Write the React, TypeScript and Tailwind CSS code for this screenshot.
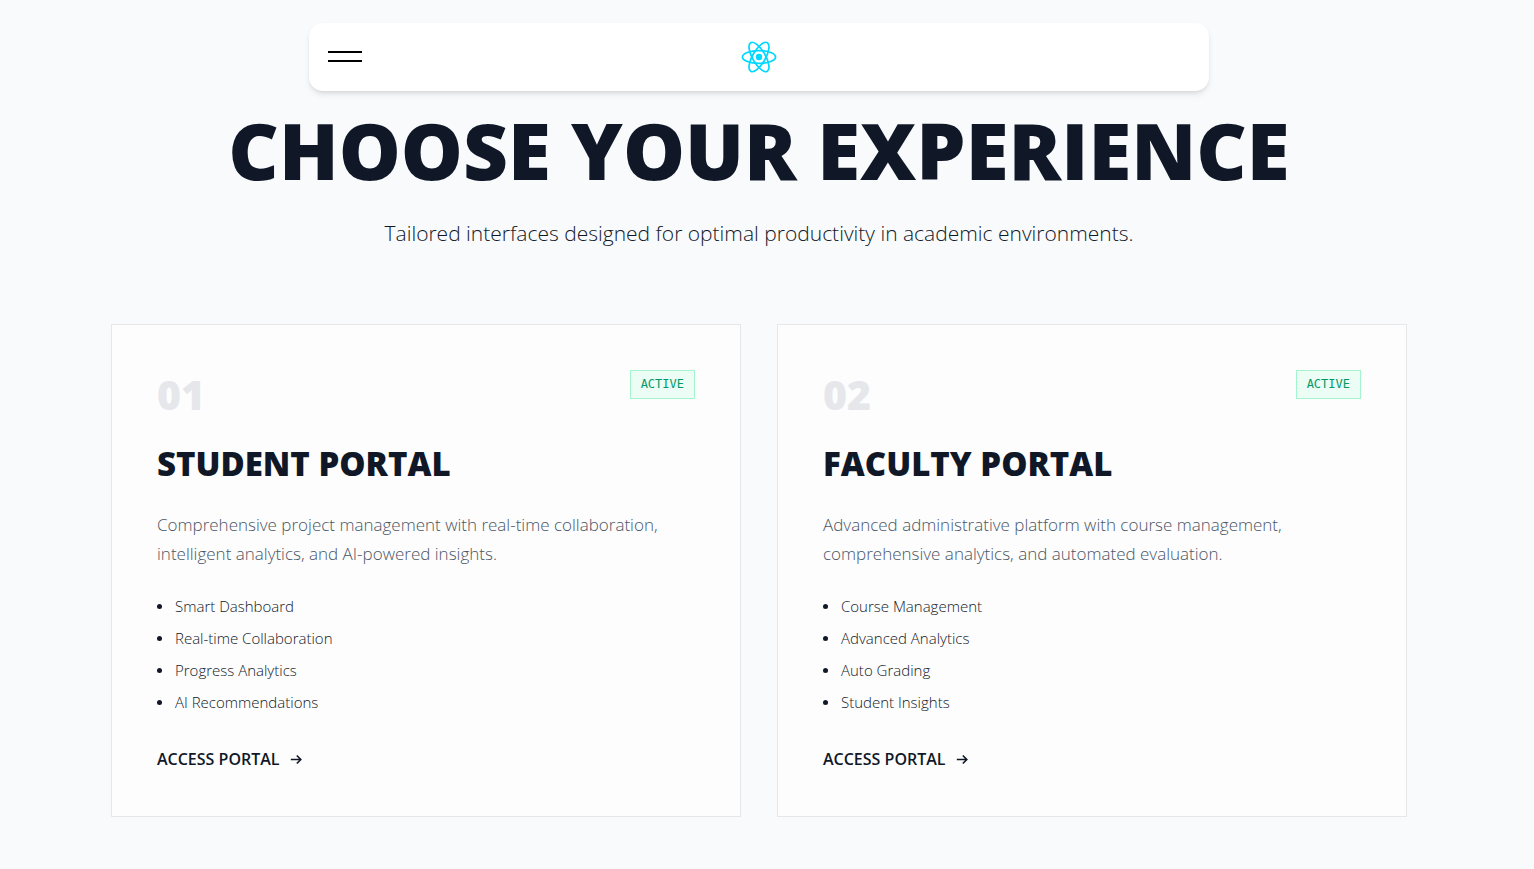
type Portal = {
  number: string;
  title: string;
  description: string;
  features: string[];
};

const portals: Portal[] = [
  {
    number: "01",
    title: "STUDENT PORTAL",
    description:
      "Comprehensive project management with real-time collaboration, intelligent analytics, and AI-powered insights.",
    features: ["Smart Dashboard", "Real-time Collaboration", "Progress Analytics", "AI Recommendations"],
  },
  {
    number: "02",
    title: "FACULTY PORTAL",
    description:
      "Advanced administrative platform with course management, comprehensive analytics, and automated evaluation.",
    features: ["Course Management", "Advanced Analytics", "Auto Grading", "Student Insights"],
  },
];

function ReactLogo() {
  return (
    <svg viewBox="-11.5 -10.23 23 20.46" className="h-8 w-9" role="img" aria-label="React">
      <circle r="2.05" fill="#00d8ff" />
      <g fill="none" stroke="#00d8ff" strokeWidth="1.1">
        <ellipse rx="10.6" ry="4.1" />
        <ellipse rx="10.6" ry="4.1" transform="rotate(60)" />
        <ellipse rx="10.6" ry="4.1" transform="rotate(120)" />
      </g>
    </svg>
  );
}

function Arrow() {
  return (
    <svg viewBox="0 0 12 12" className="size-3" fill="none" stroke="currentColor" strokeWidth="1.6" aria-hidden="true">
      <path d="M0.8 5.5H10.6M6.8 1.5L10.8 5.5L6.8 9.5" />
    </svg>
  );
}

function NavBar() {
  return (
    <nav className="mx-auto grid h-17 w-full max-w-[900px] grid-cols-[1fr_auto_1fr] items-center rounded-[14px] bg-white px-[19px] shadow-md">
      <button type="button" aria-label="Open menu" className="flex w-[34px] flex-col gap-[7px] pb-0.5">
        <span className="h-0.5 w-full bg-black" />
        <span className="h-0.5 w-full bg-black" />
      </button>
      <ReactLogo />
    </nav>
  );
}

function PortalCard({ number, title, description, features }: Portal) {
  return (
    <article className="border border-gray-200 bg-[#fdfdfd] p-[45px] pb-11">
      <div className="flex items-start justify-between">
        <span className="pt-[3px] text-[41px]/[42px] font-extrabold text-gray-200">{number}</span>
        <span className="border border-emerald-200 bg-emerald-50 px-2.5 font-['DejaVu_Sans_Mono',monospace] text-[12px]/[27px] text-emerald-600">
          ACTIVE
        </span>
      </div>
      <h2 className="mt-[27px] text-[33px]/[44px] font-extrabold text-gray-900">{title}</h2>
      <p className="mt-6 text-[17px]/[29px] font-light text-gray-600">{description}</p>
      <ul className="mt-[26px] flex flex-col gap-[7px]">
        {features.map((feature) => (
          <li key={feature} className="flex items-center gap-[13px] text-[15px]/[25px] font-light text-gray-900">
            <span className="size-[5px] rounded-full bg-gray-900" />
            {feature}
          </li>
        ))}
      </ul>
      <a href="#" className="mt-8 inline-flex items-center gap-2.5 text-[16px]/[25px] font-semibold text-gray-900">
        ACCESS PORTAL
        <Arrow />
      </a>
    </article>
  );
}

export default function App() {
  return (
    <div className="min-h-screen bg-[#f9fafc] pt-[23px] pr-4 pb-13 font-['Open_Sans','Noto_Sans',sans-serif]">
      <NavBar />
      <main className="mx-auto w-full max-w-[1296px]">
        <header className="text-center">
          <h1 className="mt-[19px] text-[78px]/[80px] font-extrabold text-gray-900">CHOOSE YOUR EXPERIENCE</h1>
          <p className="mt-[27px] text-[21px]/[32px] font-light text-gray-900">
            Tailored interfaces designed for optimal productivity in academic environments.
          </p>
        </header>
        <section className="mt-[75px] grid gap-9 md:grid-cols-2" aria-label="Portals">
          {portals.map((portal) => (
            <PortalCard key={portal.number} {...portal} />
          ))}
        </section>
      </main>
    </div>
  );
}
